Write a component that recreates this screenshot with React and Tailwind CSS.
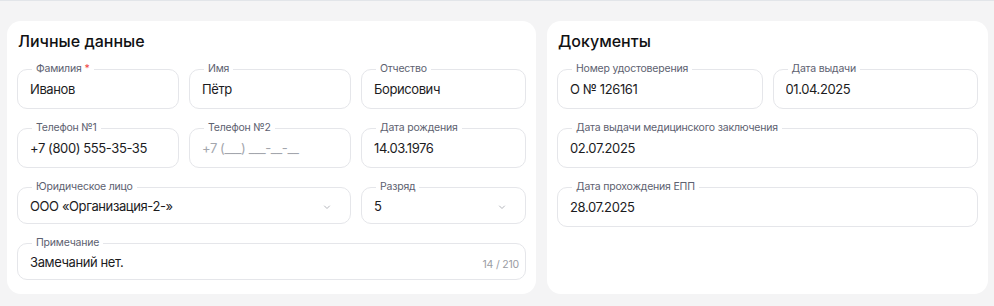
import React from 'react';

const font = {fontFamily: 'Inter, "Noto Sans", sans-serif'};

const Chevron = () => (
    <svg width="10" height="10" viewBox="0 0 10 10" className="shrink-0 mr-[6px]">
        <path d="M2.5 4 L5 6.5 L7.5 4" fill="none" stroke="#b4b6bc" strokeWidth="1" strokeLinecap="round" strokeLinejoin="round"/>
    </svg>
);

// поле с подписью на рамке
const Field = ({label, required, short, className = '', children}) => (
    <div className={`relative min-w-0 border border-[#e5e6ea] rounded-[10px] pl-[12px] pr-[12px] flex items-center ${short ? 'h-[37px] pt-[2px]' : 'h-[40px] pt-[1px]'} ${className}`}>
        <span className="absolute left-[14px] top-[-8px] bg-white px-[4px] text-[10.5px] leading-[14px] tracking-[-0.2px] text-[#5d6170] whitespace-nowrap">
            {label}
            {required && <span className="ml-[3px] text-[#ef4444]">*</span>}
        </span>
        {children}
    </div>
);

const Value = ({children, muted}) => (
    <span className={muted ? 'flex-1 min-w-0 truncate text-[13px] tracking-[-0.4px] text-[#a3a6ad]' : 'flex-1 min-w-0 truncate text-[13px] tracking-[-0.4px] text-[#1c1c1e]'}>
        {children}
    </span>
);

const App = () => {
    return (
        <div style={font} className="h-[306px] w-full bg-[#f4f4f5] border-t border-[#e2e5e9] pt-[20px] pl-[7px] pr-[6px] flex items-stretch gap-[11px] overflow-hidden">
            <div className="w-[529px] h-[273px] bg-white rounded-[14px] px-[10px] pt-[9px]">
                <h2 className="text-[16px] leading-[22px] font-medium text-[#111113] pl-[1px] mb-[17px]">Личные данные</h2>
                <div className="grid grid-cols-[162px_162px_165px] gap-x-[10px] gap-y-[19px]">
                    <Field label="Фамилия" required><Value>Иванов</Value></Field>
                    <Field label="Имя"><Value>Пётр</Value></Field>
                    <Field label="Отчество"><Value>Борисович</Value></Field>

                    <Field label="Телефон №1"><Value>+7 (800) 555-35-35</Value></Field>
                    <Field label="Телефон №2"><Value muted>+7 (___) ___-__-__</Value></Field>
                    <Field label="Дата рождения"><Value>14.03.1976</Value></Field>

                    <Field label="Юридическое лицо" short className="col-span-2">
                        <Value>ООО «Организация-2-»</Value>
                        <Chevron/>
                    </Field>
                    <Field label="Разряд" short>
                        <Value>5</Value>
                        <Chevron/>
                    </Field>

                    <Field label="Примечание" short className="col-span-3">
                        <Value>Замечаний нет.</Value>
                        <span className="mr-[-6px] mt-[5px] text-[10.5px] tracking-[-0.2px] text-[#9a9ca3]">14 / 210</span>
                    </Field>
                </div>
            </div>

            <div className="flex-1 h-[273px] bg-white rounded-[14px] px-[10px] pt-[9px]">
                <h2 className="text-[16px] leading-[22px] font-medium text-[#111113] pl-[1px] mb-[17px]">Документы</h2>
                <div className="grid grid-cols-2 gap-x-[10px] gap-y-[19px]">
                    <Field label="Номер удостоверения"><Value>О № 126161</Value></Field>
                    <Field label="Дата выдачи"><Value>01.04.2025</Value></Field>
                    <Field label="Дата выдачи медицинского заключения" className="col-span-2"><Value>02.07.2025</Value></Field>
                    <Field label="Дата прохождения ЕПП" className="col-span-2"><Value>28.07.2025</Value></Field>
                </div>
            </div>
        </div>
    );
};

export default App;
